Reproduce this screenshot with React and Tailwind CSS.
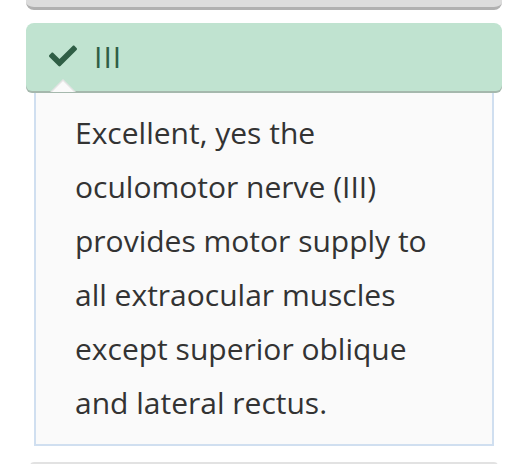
import { FaCheck } from "react-icons/fa";

export default function App() {
  return (
    <div className="w-[510px] h-[464px] overflow-hidden bg-white" style={{ fontFamily: '"Open Sans", sans-serif' }}>
      {/* Previous option (cut off) */}
      <div className="ml-[26px] mr-[8px] -mt-[30px] h-[40px] rounded-lg bg-[#dcdcdc] border-b-[3px] border-[#b0b0b0]" />

      {/* Selected option */}
      <div className="mt-[13px] ml-[26px] mr-[8px]">
        <div className="relative flex items-center gap-[17px] h-[68px] pl-[23px] rounded-t-lg rounded-b-md bg-[#c0e3d0] shadow-[0_2px_0_#a5b8ad]">
          <FaCheck className="text-[#2f5e45] -mt-[2px]" size={28} />
          <span className="text-[30px] leading-none text-[#2f5e45] tracking-[1px]">III</span>
          <div className="absolute left-[24px] bottom-[-1px] w-0 h-0 border-x-[13px] border-x-transparent border-b-[13px] border-b-[#e4e4e4]" />
          <div className="absolute left-[26px] bottom-[-1px] w-0 h-0 border-x-[11px] border-x-transparent border-b-[11px] border-b-[#fafafa]" />
        </div>

        {/* Feedback */}
        <div className="mx-[8px] bg-[#fafafa] border-2 border-t-0 border-[#d0dff0] pt-[15px] pb-[14px] pl-[39px] pr-[40px]">
          <p className="text-[30px] leading-[54px] text-[#333333]">
            Excellent, yes the oculomotor nerve (III) provides motor supply to all extraocular muscles except superior oblique and lateral rectus.
          </p>
        </div>
      </div>

      {/* Next option (cut off) */}
      <div className="mt-[16px] ml-[30px] mr-[12px] h-[20px] border-t-2 border-[#e2e2e2] rounded-t" />
    </div>
  );
}
